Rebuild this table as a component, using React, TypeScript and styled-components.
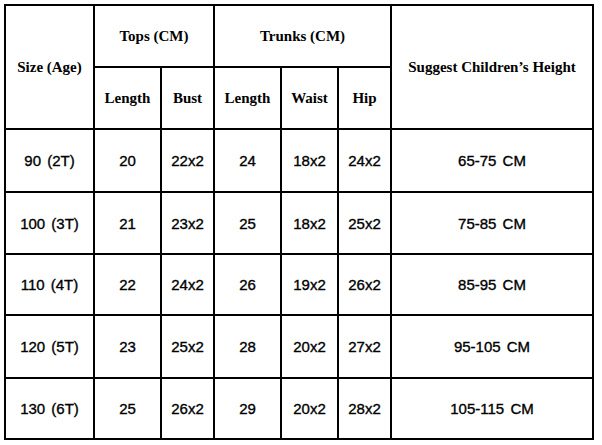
import React from "react";
import styled, { createGlobalStyle } from "styled-components";

const Global = createGlobalStyle`
  html, body { margin: 0; padding: 0; background: #ffffff; }
  body { width: 602px; height: 445px; overflow: hidden; }
`;

const Page = styled.div`
  padding: 4px 0 0 4px;
`;

const Table = styled.div`
  display: grid;
  grid-template-columns: 87px 65px 51px 65px 55px 51px 200px;
  grid-template-rows: 60px 60px 61px 60px 59px 61px 59px;
  gap: 2px;
  padding: 2px;
  width: 590px;
  box-sizing: border-box;
  background: #000000;
`;

const Cell = styled.div<{ $col?: string; $row?: string }>`
  background: #ffffff;
  display: flex;
  align-items: center;
  justify-content: center;
  text-align: center;
  color: #000000;
  grid-column: ${(p) => p.$col || "auto"};
  grid-row: ${(p) => p.$row || "auto"};
`;

const HeadCell = styled(Cell)`
  font-family: "Liberation Serif", "Times New Roman", serif;
  font-weight: 700;
  font-size: 15px;
`;

const DataCell = styled(Cell)`
  font-family: "Liberation Sans", Arial, sans-serif;
  font-size: 15px;
  word-spacing: 2px;
  -webkit-text-stroke: 0.35px #000000;
`;

const rows = [
  ["90 (2T)", "20", "22x2", "24", "18x2", "24x2", "65-75 CM"],
  ["100 (3T)", "21", "23x2", "25", "18x2", "25x2", "75-85 CM"],
  ["110 (4T)", "22", "24x2", "26", "19x2", "26x2", "85-95 CM"],
  ["120 (5T)", "23", "25x2", "28", "20x2", "27x2", "95-105 CM"],
  ["130 (6T)", "25", "26x2", "29", "20x2", "28x2", "105-115 CM"],
];

export default function App() {
  return (
    <>
      <Global />
      <Page>
        <Table>
          <HeadCell $col="1" $row="1 / span 2">Size (Age)</HeadCell>
          <HeadCell $col="2 / span 2" $row="1">Tops (CM)</HeadCell>
          <HeadCell $col="4 / span 3" $row="1">Trunks (CM)</HeadCell>
          <HeadCell $col="7" $row="1 / span 2">Suggest Children’s Height</HeadCell>
          <HeadCell $col="2" $row="2">Length</HeadCell>
          <HeadCell $col="3" $row="2">Bust</HeadCell>
          <HeadCell $col="4" $row="2">Length</HeadCell>
          <HeadCell $col="5" $row="2">Waist</HeadCell>
          <HeadCell $col="6" $row="2">Hip</HeadCell>
          {rows.map((r, i) =>
            r.map((v, j) => <DataCell key={`${i}-${j}`}>{v}</DataCell>)
          )}
        </Table>
      </Page>
    </>
  );
}
